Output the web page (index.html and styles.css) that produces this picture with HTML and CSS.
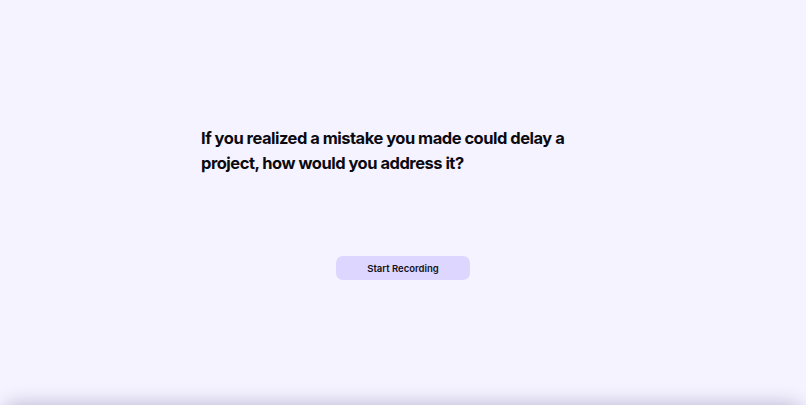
FILE: index.html
```html
<!DOCTYPE html>
<html lang="en">
<head>
<meta charset="utf-8">
<title>Question</title>
<link rel="stylesheet" href="styles.css">
</head>
<body>
<main class="page">
  <section class="card">
    <h1 class="question">If you realized a mistake you made could delay a project, how would you address it?</h1>
    <div class="actions">
      <button class="record-btn" type="button">Start Recording</button>
    </div>
  </section>
</main>
<div class="bottom-edge"></div>
</body>
</html>
```

FILE: styles.css
```css
html, body {
  margin: 0;
  padding: 0;
  height: 100%;
}
body {
  background: #f5f3ff;
  font-family: Inter, "Noto Sans", sans-serif;
  color: #0b0b12;
  overflow: hidden;
  position: relative;
}
.page {
  height: 100%;
  display: flex;
  justify-content: center;
}
.card {
  width: 404px;
  padding-top: 126px;
  display: flex;
  flex-direction: column;
}
.question {
  margin: 0;
  font-size: 16.5px;
  line-height: 25px;
  font-weight: 700;
  letter-spacing: -0.03em;
  color: #0a0a10;
}
.actions {
  margin-top: 80px;
  display: flex;
  justify-content: center;
}
.record-btn {
  width: 134px;
  height: 24px;
  border: none;
  border-radius: 7px;
  background: #ddd6fe;
  font-family: Inter, "Noto Sans", sans-serif;
  font-size: 9.5px;
  font-weight: 600;
  color: #111118;
  padding: 0;
  cursor: pointer;
}
.bottom-edge {
  position: fixed;
  left: 0;
  right: 0;
  bottom: -40px;
  height: 40px;
  border-radius: 28px;
  box-shadow: 0 -2px 18px rgba(60, 50, 110, 0.28);
}
```
